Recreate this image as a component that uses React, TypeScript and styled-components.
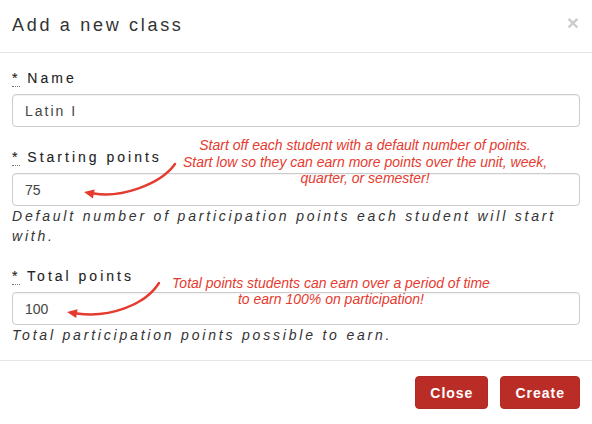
import React, { ReactNode } from "react";
import styled, { createGlobalStyle } from "styled-components";

const GlobalStyle = createGlobalStyle`
  html, body {
    margin: 0;
    padding: 0;
    background: #fff;
  }
  body {
    font-family: "Liberation Sans", Arial, Helvetica, sans-serif;
    color: #333;
  }
`;

const Modal = styled.div`
  width: 592px;
  height: 424px;
  background: #fff;
  box-sizing: border-box;
  display: flex;
  flex-direction: column;
`;

const Header = styled.header`
  display: flex;
  align-items: flex-start;
  justify-content: space-between;
  padding: 14px 12px 16px;
  border-bottom: 1px solid #e5e5e5;
`;

const Title = styled.h4`
  margin: 0;
  font-size: 18px;
  line-height: 22px;
  font-weight: normal;
  letter-spacing: 2.7px;
  color: #333;
`;

const CloseX = styled.button`
  border: 0;
  background: none;
  padding: 0;
  margin: 0 1px 0 0;
  font-family: "Liberation Sans", Arial, sans-serif;
  font-size: 21px;
  font-weight: bold;
  line-height: 18px;
  color: #000;
  opacity: 0.2;
  cursor: pointer;
`;

const Body = styled.section`
  padding: 15px 12px 15px;
`;

const FormGroup = styled.div`
  position: relative;
  margin-bottom: 20px;

  &:last-child {
    margin-bottom: 0;
  }
`;

const Label = styled.label`
  display: block;
  margin-bottom: 6px;
  font-size: 14px;
  line-height: 20px;
  font-weight: normal;
  letter-spacing: 3px;
  color: #222;
  -webkit-text-stroke: 0.1px #222;
`;

const Req = styled.abbr`
  text-decoration: none;
  border-bottom: 1px dotted #777;
  cursor: help;
`;

const Input = styled.input<{ $spaced?: boolean }>`
  display: block;
  box-sizing: border-box;
  width: 100%;
  height: 33px;
  padding: 0 12px;
  font-family: "Liberation Sans", Arial, sans-serif;
  font-size: 14px;
  letter-spacing: ${(p) => (p.$spaced ? "2px" : "0")};
  color: #444;
  background: #fff;
  border: 1px solid #ccc;
  border-radius: 4px;
  box-shadow: inset 0 1px 1px rgba(0, 0, 0, 0.05);
  outline: none;
`;

const Help = styled.p`
  margin: 0;
  font-size: 14px;
  line-height: 20px;
  font-style: italic;
  letter-spacing: 2.8px;
  color: #333;
`;

const Note = styled.div<{ $top: number; $left: number; $width: number; $lh: number }>`
  position: absolute;
  top: ${(p) => p.$top}px;
  left: ${(p) => p.$left}px;
  width: ${(p) => p.$width}px;
  text-align: center;
  font-size: 14px;
  line-height: ${(p) => p.$lh}px;
  font-style: italic;
  color: #e53b2f;
  pointer-events: none;
`;

const ArrowSvg = styled.svg`
  position: absolute;
  top: 0;
  left: 0;
  overflow: visible;
  pointer-events: none;
`;

const Footer = styled.footer`
  display: flex;
  justify-content: flex-end;
  gap: 12px;
  padding: 15px 12px;
  border-top: 1px solid #e5e5e5;
`;

const Button = styled.button`
  height: 33px;
  padding: 0 14px;
  border: 1px solid #b02a25;
  border-radius: 4px;
  background: #ba2d27;
  color: #fff;
  font-family: "Liberation Sans", Arial, sans-serif;
  font-size: 14px;
  font-weight: bold;
  letter-spacing: 1px;
  cursor: pointer;
`;

interface ArrowProps {
  d: string;
  head: string;
}

const Arrow = ({ d, head }: ArrowProps) => (
  <ArrowSvg width="568" height="80">
    <path d={d} fill="none" stroke="#e53b2f" strokeWidth="2.4" strokeLinecap="round" />
    <polygon points={head} fill="#e53b2f" />
  </ArrowSvg>
);

interface FieldProps {
  label: string;
  value: string;
  spaced?: boolean;
  help?: string;
  children?: ReactNode;
}

const Field = ({ label, value, spaced, help, children }: FieldProps) => (
  <FormGroup>
    <Label>
      <Req title="required">*</Req> {label}
    </Label>
    <Input defaultValue={value} $spaced={spaced} />
    {help && <Help>{help}</Help>}
    {children}
  </FormGroup>
);

export default function App() {
  return (
    <>
      <GlobalStyle />
      <Modal>
        <Header>
          <Title>Add a new class</Title>
          <CloseX aria-label="Close">×</CloseX>
        </Header>
        <Body>
          <Field label="Name" value="Latin I" spaced />
          <Field
            label="Starting points"
            value="75"
            help="Default number of participation points each student will start with."
          >
            <Arrow
              d="M163,17 C148,38 108,51 82,46.5"
              head="72,45 82.7,42.6 80.9,51.4"
            />
            <Note $top={-10} $left={143} $width={420} $lh={16.5}>
              Start off each student with a default number of points.
              <br />
              Start low so they can earn more points over the unit, week,
              <br />
              quarter, or semester!
            </Note>
          </Field>
          <Field label="Total points" value="100" help="Total participation points possible to earn.">
            <Arrow
              d="M147,17 C133,39 98,52 65,47.5"
              head="55,46 65.6,43.3 64.1,52.1"
            />
            <Note $top={9} $left={119} $width={400} $lh={16}>
              Total points students can earn over a period of time
              <br />
              to earn 100% on participation!
            </Note>
          </Field>
        </Body>
        <Footer>
          <Button>Close</Button>
          <Button>Create</Button>
        </Footer>
      </Modal>
    </>
  );
}
